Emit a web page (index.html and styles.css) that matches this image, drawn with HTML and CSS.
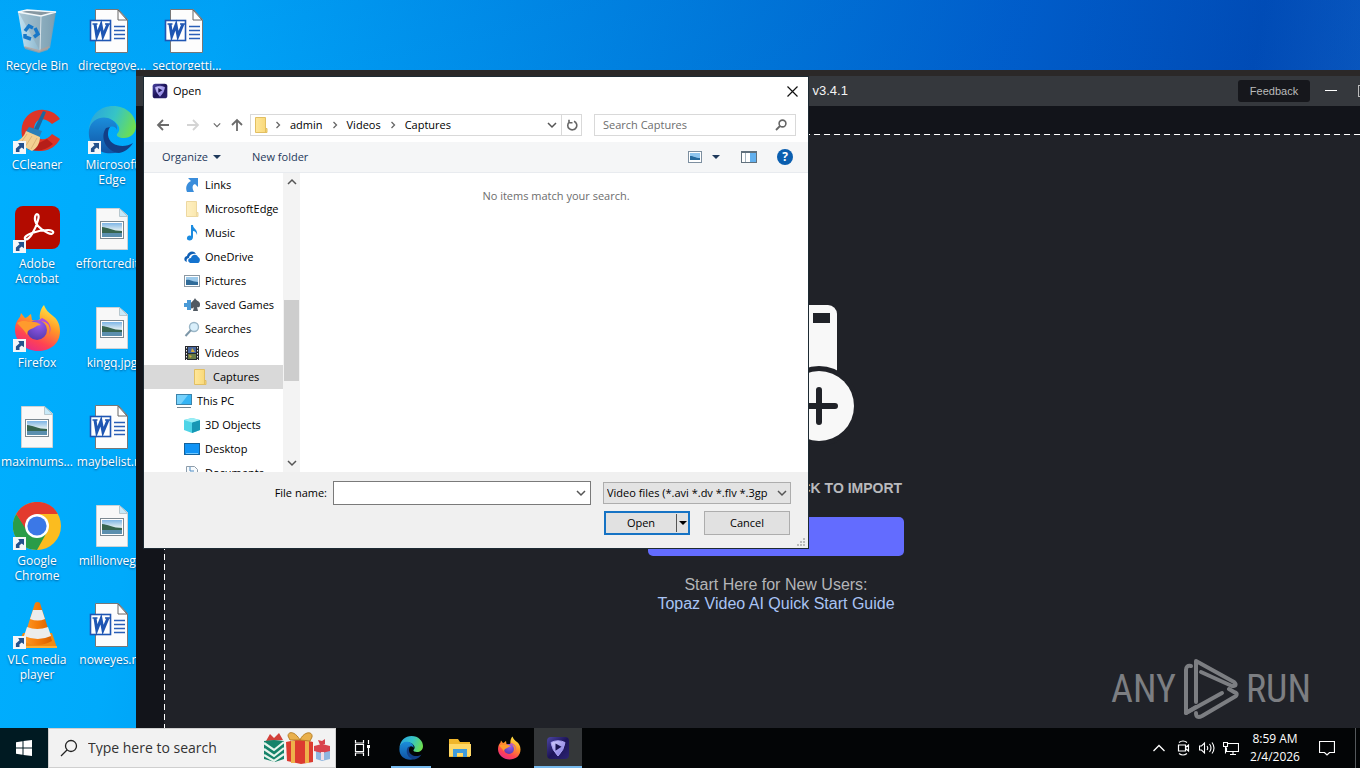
FILE: index.html
```html
<!DOCTYPE html>
<html lang="en">
<head>
<meta charset="utf-8">
<title>Desktop</title>
<link rel="stylesheet" href="styles.css">
</head>
<body>
<svg class="defs" aria-hidden="true">
  <defs>
    <linearGradient id="gGlass" x1="0" x2="1"><stop offset="0" stop-color="#e4edf2"/><stop offset=".55" stop-color="#a9bcc7"/><stop offset="1" stop-color="#7f98a6"/></linearGradient>
    <linearGradient id="gEdgeTop" x1="0" x2="1" y1=".3" y2=".6"><stop offset="0" stop-color="#2aa5dd"/><stop offset=".5" stop-color="#36c4c6"/><stop offset="1" stop-color="#6fe04c"/></linearGradient>
    <linearGradient id="gEdgeLow" x1="0" x2="0" y1="0" y2="1"><stop offset="0" stop-color="#1b8edb"/><stop offset="1" stop-color="#1153a4"/></linearGradient>
    <linearGradient id="gFox" x1=".8" x2=".3" y1="0" y2="1"><stop offset="0" stop-color="#fff04a"/><stop offset=".4" stop-color="#ff9a26"/><stop offset=".75" stop-color="#ff4352"/><stop offset="1" stop-color="#e62a88"/></linearGradient>
    <radialGradient id="gGlobe" cx=".6" cy=".2" r=".9"><stop offset="0" stop-color="#9a5cf0"/><stop offset="1" stop-color="#5037a8"/></radialGradient>
    <linearGradient id="gCone" x1="0" x2="1"><stop offset="0" stop-color="#ff9c2a"/><stop offset=".5" stop-color="#f57c0a"/><stop offset="1" stop-color="#d85f00"/></linearGradient>
    <linearGradient id="gPhoto" x1="0" x2="0" y1="0" y2="1"><stop offset="0" stop-color="#7db5e6"/><stop offset=".5" stop-color="#dcebf0"/><stop offset="1" stop-color="#5d8fa3"/></linearGradient>
    <linearGradient id="gTopaz" x1="0" x2="1" y1="0" y2="1"><stop offset="0" stop-color="#4c46a4"/><stop offset=".5" stop-color="#1d1458"/><stop offset="1" stop-color="#2c2372"/></linearGradient>
    <linearGradient id="gGem" x1="0" x2="1" y1="0" y2="1"><stop offset="0" stop-color="#d4cffc"/><stop offset="1" stop-color="#7a70dd"/></linearGradient>
    <linearGradient id="gFolder" x1="0" x2="1"><stop offset="0" stop-color="#ffe79b"/><stop offset="1" stop-color="#f8d775"/></linearGradient>

    <symbol id="word" viewBox="0 0 48 48"><path d="M7.500 2.500h23l9 10v33h-32z" fill="#fdfdfd" stroke="#777"/><path d="M30 3v10h9z" fill="#fff" stroke="#666"/><path d="M26 19.500h11M26 23.500h11M26 27.500h11M26 31.500h11" stroke="#2a5fb8" stroke-width="1.400"/><rect x="2.500" y="13.500" width="20" height="20" fill="#fff" stroke="#1f56b3" stroke-width="1.600"/><path d="M7 17l1.800 12L13 18l2 11 5-12" fill="none" stroke="#1f56b3" stroke-width="3"/><path d="M4.500 17h5M17 17h5" stroke="#1f56b3" stroke-width="1.500"/></symbol>
    <symbol id="image" viewBox="0 0 48 48"><path d="M8.500 3.500h23l8 7v34h-31z" fill="#f8f8f8" stroke="#ccd2d6"/><path d="M31.500 3.500v8h8z" fill="#c8e9f8" stroke="#b7c7ce"/><rect x="12.500" y="16.500" width="23" height="17" fill="#fff" stroke="#7c8890"/><rect x="14" y="18" width="20" height="14" fill="url(#gPhoto)"/><path d="M14 22c5 0 11 4 20 4v2H14z" fill="#36644f"/><path d="M14 28h20v4H14z" fill="#5b8fae"/></symbol>
    <symbol id="bin" viewBox="0 0 48 48"><path d="M5 5l9-2 29 2-6 36-11 4-15-5z" fill="url(#gGlass)" opacity=".85"/><path d="M6 6l21 4 15-4-6 34-9 4z" fill="#8fa4b0" opacity=".45"/><path d="M5 5l9-2 29 2-15 4z" fill="#8798a2" stroke="#f4f8fa" stroke-width="1.300"/><path d="M28 9l-1 35" stroke="#d6e2e8"/><path d="M11 39l15 4 10-4-1 4-9 3-14-4z" fill="#b89d91" opacity=".7"/><g fill="none" stroke="#1878c8" stroke-width="3.500"><path d="M12 24l4-5 4 2M22 21l3 6-4 3M18 32l-6-2 0-3"/></g></symbol>
    <symbol id="ccleaner" viewBox="0 0 48 48"><path d="M47 13C39 0 14-1 9 20c-3 17 9 26 20 25 9-1 14-5 18-12l-8-5c-6 8-17 7-18-4 0-12 10-14 18-6z" fill="#dd3527"/><path d="M14 43c10 3 18 2 26-5l-6-5" fill="#b61e19"/><path d="M30 5l3 1-8 19-4-2z" fill="#1c679e"/><path d="M16 21l13 4-3 7-14-5z" fill="#2a7fb8"/><path d="M13 25l14 6c0 7-4 12-8 14L2 36c5-2 9-5 11-11z" fill="#f3cf91"/><path d="M14 28L7 38M19 30l-7 11M24 32l-6 11" stroke="#dcb477"/></symbol>
    <symbol id="edge" viewBox="0 0 48 48"><path d="M1 24C2 8 13 0 25 0c14 0 23 10 23 20 0 8-6 12-12 12-5 0-8-2-7-4 3-3 3-7 0-10C22 9 5 11 1 24z" fill="url(#gEdgeTop)"/><path d="M1 24c2-11 12-14 19-12 6 2 10 6 9 12-1-3-5-5-8-2-5 5-1 20 10 24C14 51-1 41 1 24z" fill="url(#gEdgeLow)"/><path d="M18 22c-7 10 1 24 13 25 6-1 11-5 14-10-9 6-24 3-25-8 0-3 0-5 2-8z" fill="#123f87"/></symbol>
    <symbol id="acrobat" viewBox="0 0 48 48"><rect x="2" y="1" width="45" height="43" rx="8" fill="#b30b00"/><path d="M12 34c-2-4 13-9 23-9 8 0 6 6 0 3-8-4-14-10-13-16 1-5 5-3 3 3-2 8-9 22-13 19z" fill="none" stroke="#fff" stroke-width="2.200"/></symbol>
    <symbol id="firefox" viewBox="0 0 48 48"><path d="M31 1c2 5 4 7 9 11 3 2 7 7 7 15 0 13-10 20-22 20S2 38 2 26C2 19 5 15 7 13l1-4 4 5c2 0 4-3 6-4l1 6c3 0 6 1 8-1-1-5 1-11 4-14z" fill="url(#gFox)"/><circle cx="24" cy="26" r="10" fill="url(#gGlobe)"/><path d="M4 19c5-3 9-2 12-1 4-1 9 0 12 3-5 0-6 3-10 4-3 1-4 3-4 6-2-4-5-7-10-12z" fill="#ff9b2d"/><path d="M29 14c7 3 11 9 7 17 3-11-3-14-11-14z" fill="#b24cd9"/></symbol>
    <symbol id="chrome" viewBox="0 0 48 48"><circle cx="24" cy="24" r="24" fill="#fbbc1f"/><path d="M24 24h-12L3.200 12A24 24 0 0 0 24 48l10-18z" fill="#2a9c48"/><path d="M24 12h20.800C37-4 12-4 3.200 12L14 29z" fill="#e33b2e"/><circle cx="24" cy="24" r="12" fill="#fff"/><circle cx="24" cy="24" r="9.600" fill="#3b78e7"/></symbol>
    <symbol id="vlc" viewBox="0 0 48 48"><path d="M10 32h29l5 15H3z" fill="#f08a14"/><path d="M3 45h41v2H3z" fill="#ffae33"/><path d="M22 2q2.500-2 5 0l12 38q-15 8-29 0z" fill="url(#gCone)"/><path d="M20 9h9l3 9q-7 3-15 0zM14 26q10 4 21 0l3 9q-13 6-27 0z" fill="#ececec"/></symbol>
    <symbol id="topaz" viewBox="0 0 24 24"><rect x="1" y="1" width="22" height="22" rx="4" fill="url(#gTopaz)"/><path d="M5 6.500Q12 3 19 6.500 18 14 12 20 6 14 5 6.500z" fill="url(#gGem)" stroke="#a9a0f2" stroke-linejoin="round"/><path d="M9.500 7.500l6 3.300-6 4z" fill="#19124f"/></symbol>
    <symbol id="folder" viewBox="0 0 16 16"><path d="M2.500.5h10v11h1.500v4H2.500z" fill="url(#gFolder)" stroke="#e2bf62"/><path d="M12.500 10v5" stroke="#e2bf62"/></symbol>
    <symbol id="explorer" viewBox="0 0 24 24"><path d="M1 3h9l2 3h10v15H1z" fill="#f0b62b"/><path d="M1 8h22v12H1z" fill="#ffd866"/><path d="M5 21v-8h14v8h-4v-4H9v4z" fill="#3f9bda"/></symbol>
    <symbol id="picture" viewBox="0 0 16 16"><rect x=".5" y="2.500" width="15" height="11" fill="#fff" stroke="#8b98a3"/><rect x="2" y="4" width="12" height="8" fill="#9cc9ea"/><path d="M2 7c4-1 6 2 12 2v3H2z" fill="#316c99"/></symbol>
    <symbol id="links" viewBox="0 0 16 16"><path d="M4 1h10v9l-3-3c-3 1-3 4-1 8H3C1 10 3 6 7 4z" fill="#3a8ddb"/></symbol>
    <symbol id="music" viewBox="0 0 16 16"><path d="M7 0h2c0 4 5 4 4 10-1-3-2-4-4-4v6c0 5-7 4-6 1 0-2 2-3 4-2z" fill="#1b8be0"/></symbol>
    <symbol id="onedrive" viewBox="0 0 16 16"><path d="M1 12c-2-3 1-5 2-5 1-5 7-6 9-2-5-1-7 2-7 4-2 0-3 2-2 4z" fill="#0e5fb5"/><path d="M6 14c-3-2-2-5 1-5 1-4 6-4 7-1 3 1 2 6 0 6z" fill="#1473cf"/></symbol>
    <symbol id="games" viewBox="0 0 16 16"><path d="M11 1c-1 3-5 4-5 8 0 3 3 3 4 1l-1 4h5l-1-4c3 1 3-1 3-3 0-3-4-3-5-6z" fill="#505962"/><path d="M0 6h3V3h4v10H3v-3H0z" fill="#4a9ad6"/></symbol>
    <symbol id="search" viewBox="0 0 16 16"><circle cx="10" cy="6" r="4.500" fill="#d9effb" stroke="#9ab6c7" stroke-width="1.400"/><path d="M7 9l-5.500 6" stroke="#7d97a8" stroke-width="2"/></symbol>
    <symbol id="video" viewBox="0 0 16 16"><path d="M1 1h14v14H1z" fill="#27292e"/><path d="M4 2h8v6H4z" fill="#48679f"/><path d="M4 9h8v5H4z" fill="#677b48"/><path d="M8 3l3 4H7zM5 10l3 1-2 2z" fill="#d8ad3a"/><path d="M2.500 2v13M13.500 2v13" stroke="#eee" stroke-dasharray="1.500 1.500"/></symbol>
    <symbol id="pc" viewBox="0 0 16 16"><rect x=".5" y="1.500" width="15" height="10" fill="#35b4f4" stroke="#3c83aa"/><path d="M1 2h11L5 11H1z" fill="#76d1fb"/><path d="M1 14.500h14" stroke="#72848f"/></symbol>
    <symbol id="cube" viewBox="0 0 16 16"><path d="M0 3l8-2 8 2v10l-8 3-8-3z" fill="#4ed4e7"/><path d="M8 5.500L16 3v10l-8 3z" fill="#1797b4"/><path d="M0 3l8 2.500L16 3 8 1z" fill="#9beef5"/></symbol>
    <symbol id="screen" viewBox="0 0 16 16"><rect x=".5" y="2.500" width="15" height="11" fill="#1093f5" stroke="#14629c"/><path d="M2 12.500h12" stroke="#72c9ff"/></symbol>
    <symbol id="docs" viewBox="0 0 16 16"><path d="M2.500 1.500h8l3 3v11h-11z" fill="#f7fafc" stroke="#8e9dab"/><path d="M6 2v4h4M4.500 8h7M4.500 11h7" stroke="#4f8cc4" fill="none"/></symbol>
    <symbol id="chev" viewBox="0 0 10 10"><path d="M1 3l4 4 4-4" fill="none" stroke="currentColor" stroke-width="1.500"/></symbol>
    <symbol id="tri" viewBox="0 0 10 10"><path d="M1 3h8L5 7z" fill="currentColor"/></symbol>
    <symbol id="crumb" viewBox="0 0 10 10"><path d="M3.500 2l3 3-3 3" fill="none" stroke="#666" stroke-width="1.300"/></symbol>
    <symbol id="arrow" viewBox="0 0 14 14"><path d="M13 7H2M7 2L2 7l5 5" fill="none" stroke="currentColor" stroke-width="1.800"/></symbol>
  </defs>
</svg>

<main class="desktop">
  <ul class="shortcuts">
    <li><svg><use href="#bin"/></svg><span>Recycle Bin</span></li>
    <li class="linked"><svg><use href="#ccleaner"/></svg><span>CCleaner</span></li>
    <li class="linked"><svg><use href="#acrobat"/></svg><span>Adobe<br>Acrobat</span></li>
    <li class="linked"><svg><use href="#firefox"/></svg><span>Firefox</span></li>
    <li><svg><use href="#image"/></svg><span>maximums...</span></li>
    <li class="linked"><svg><use href="#chrome"/></svg><span>Google<br>Chrome</span></li>
    <li class="linked"><svg><use href="#vlc"/></svg><span>VLC media<br>player</span></li>
    <li><svg><use href="#word"/></svg><span>directgove...</span></li>
    <li class="linked"><svg><use href="#edge"/></svg><span>Microsoft<br>Edge</span></li>
    <li><svg><use href="#image"/></svg><span>effortcredit...</span></li>
    <li><svg><use href="#image"/></svg><span>kingq.jpg</span></li>
    <li><svg><use href="#word"/></svg><span>maybelist.rtf</span></li>
    <li><svg><use href="#image"/></svg><span>millionveg...</span></li>
    <li><svg><use href="#word"/></svg><span>noweyes.rtf</span></li>
    <li><svg><use href="#word"/></svg><span>sectorgetti...</span></li>
  </ul>

  <section class="app" aria-label="Topaz Video AI">
    <header class="app-bar">
      <h1><svg><use href="#topaz"/></svg>Topaz Video AI <span>v3.4.1</span></h1>
      <div class="app-actions">
        <button class="feedback" type="button">Feedback</button>
        <button class="win-btn" type="button" aria-label="Minimize"><svg viewBox="0 0 12 12"><path d="M0 5.500h12" stroke="#fff"/></svg></button>
        <button class="win-btn" type="button" aria-label="Maximize"><svg viewBox="0 0 12 12"><rect x=".5" y=".5" width="11" height="11" fill="none" stroke="#bbb"/></svg></button>
      </div>
    </header>
    <div class="app-body">
      <div class="dropzone">
        <svg class="film" viewBox="0 0 122 136"><rect width="122" height="120" rx="9" fill="#f8f8f8"/><path d="M8 8h17v10H8zM8 36h17v10H8zM8 64h17v10H8zM8 92h17v10H8zM98 8h17v10H98z" fill="#202228"/><circle cx="104" cy="101" r="40" fill="#202228"/><circle cx="104" cy="101" r="35" fill="#f8f8f8"/><path d="M104 85v32M88 101h32" stroke="#202228" stroke-width="6" stroke-linecap="round"/></svg>
        <h2>DRAG &amp; DROP OR CLICK TO IMPORT</h2>
        <button class="browse" type="button" aria-label="Browse"></button>
        <p class="help">Start Here for New Users:<br><a href="#guide">Topaz Video AI Quick Start Guide</a></p>
      </div>
    </div>
  </section>

  <section class="dialog" role="dialog" aria-labelledby="dlg-title">
    <header class="dlg-title">
      <svg class="i16"><use href="#topaz"/></svg>
      <h2 id="dlg-title">Open</h2>
      <button type="button" aria-label="Close"><svg viewBox="0 0 11 11"><path d="M.5.5l10 10M10.500.5l-10 10" stroke="#111" stroke-width="1.200"/></svg></button>
    </header>
    <nav class="dlg-nav">
      <button class="nav-btn" type="button" aria-label="Back"><svg><use href="#arrow"/></svg></button>
      <button class="nav-btn off" type="button" aria-label="Forward"><svg class="flip"><use href="#arrow"/></svg></button>
      <button class="nav-btn slim" type="button" aria-label="Recent locations"><svg><use href="#chev"/></svg></button>
      <button class="nav-btn up" type="button" aria-label="Up"><svg class="turn"><use href="#arrow"/></svg></button>
      <div class="address">
        <svg class="i16"><use href="#folder"/></svg>
        <svg class="i10"><use href="#crumb"/></svg><a href="#admin">admin</a>
        <svg class="i10"><use href="#crumb"/></svg><a href="#videos">Videos</a>
        <svg class="i10"><use href="#crumb"/></svg><a href="#captures">Captures</a>
        <button class="drop" type="button" aria-label="Previous locations"><svg class="i10"><use href="#chev"/></svg></button>
        <button class="refresh" type="button" aria-label="Refresh"><svg viewBox="0 0 12 12"><path d="M3.500 2.800A4.500 4.500 0 1 0 8 2.200M3 .8v3h3.500" fill="none" stroke="#666" stroke-width="1.600"/></svg></button>
      </div>
      <div class="find">
        <input type="text" placeholder="Search Captures" aria-label="Search Captures">
        <svg viewBox="0 0 12 12"><circle cx="7.500" cy="4.500" r="3.400" fill="none" stroke="#666" stroke-width="1.600"/><path d="M5 7L1 11" stroke="#666" stroke-width="1.800"/></svg>
      </div>
    </nav>
    <div class="dlg-tools">
      <button type="button">Organize <svg class="i10"><use href="#tri"/></svg></button>
      <button class="new" type="button">New folder</button>
      <button class="view" type="button" aria-label="Change view"><svg viewBox="0 0 14 12"><rect x=".5" y=".5" width="13" height="11" fill="#fff" stroke="#7d8fa0"/><rect x="2" y="2" width="10" height="7" fill="#8fc5ee"/><path d="M2 5c4 0 5 2 10 2v2H2z" fill="#26699c"/></svg></button>
      <button class="more" type="button" aria-label="More options"><svg class="i10"><use href="#tri"/></svg></button>
      <button class="pane" type="button" aria-label="Preview pane"><svg viewBox="0 0 16 12"><rect x=".5" y=".5" width="15" height="11" fill="#fff" stroke="#61717d"/><path d="M1 1.500h14" stroke="#61717d"/><path d="M9 2h6v9H9z" fill="#62b0ee"/><path d="M4.500 2v9" stroke="#a5b4bf"/></svg></button>
      <button class="help-btn" type="button" aria-label="Help">?</button>
    </div>
    <div class="dlg-body">
      <ul class="tree">
        <li><svg><use href="#links"/></svg>Links</li>
        <li class="faded"><svg><use href="#folder"/></svg>MicrosoftEdge</li>
        <li><svg><use href="#music"/></svg>Music</li>
        <li><svg><use href="#onedrive"/></svg>OneDrive</li>
        <li><svg><use href="#picture"/></svg>Pictures</li>
        <li><svg><use href="#games"/></svg>Saved Games</li>
        <li><svg><use href="#search"/></svg>Searches</li>
        <li><svg><use href="#video"/></svg>Videos</li>
        <li class="child selected"><svg><use href="#folder"/></svg>Captures</li>
        <li class="root"><svg><use href="#pc"/></svg>This PC</li>
        <li><svg><use href="#cube"/></svg>3D Objects</li>
        <li><svg><use href="#screen"/></svg>Desktop</li>
        <li><svg><use href="#docs"/></svg>Documents</li>
      </ul>
      <div class="scroll">
        <svg class="i10 flip-v"><use href="#chev"/></svg>
        <div class="track"><div class="thumb"></div></div>
        <svg class="i10"><use href="#chev"/></svg>
      </div>
      <p class="empty">No items match your search.</p>
    </div>
    <form class="dlg-foot">
      <div class="foot-row">
        <label for="fname">File name:</label>
        <div class="combo"><input id="fname" type="text"><svg class="i10"><use href="#chev"/></svg></div>
        <div class="type"><select aria-label="File type"><option>Video files (*.avi *.dv *.flv *.3gp</option></select><svg class="i10"><use href="#chev"/></svg></div>
      </div>
      <div class="foot-row">
        <div class="split"><button type="button">Open</button><button class="arrow" type="button" aria-label="Open options"><svg class="i10"><use href="#tri"/></svg></button></div>
        <button class="cancel" type="button">Cancel</button>
      </div>
      <svg class="grip" viewBox="0 0 9 9"><path d="M6 0h2v2H6zM3 3h2v2H3zM6 3h2v2H6zM0 6h2v2H0zM3 6h2v2H3zM6 6h2v2H6z" fill="#bcbcbc"/></svg>
    </form>
  </section>

  <div class="watermark">
    <span>ANY</span>
    <svg viewBox="0 0 56 62"><g fill="none" stroke="currentColor" stroke-width="4" stroke-linejoin="round" stroke-linecap="round"><path d="M8 8Q3 7 3 12v43l36-20"/><path d="M13 44V3l38 21q4 4-2 4L18 14"/><path d="M3 55l10-6M13 55q0 6 6 3l34-20q2-3-2-4l-5-3"/></g></svg>
    <span>RUN</span>
  </div>
</main>

<footer class="taskbar">
  <button class="start" type="button" aria-label="Start"><svg viewBox="0 0 16 16"><path d="M0 2.200l6.500-.9v6.200H0zM7.500 1.100L16 0v7.500H7.500zM0 8.500h6.500v6.200L0 13.800zM7.500 8.500H16V16l-8.500-1.100z" fill="#fff"/></svg></button>
  <div class="task-search">
    <svg class="lens" viewBox="0 0 18 18"><circle cx="11" cy="7" r="5.500" fill="none" stroke="#222" stroke-width="1.300"/><path d="M7 11l-6 6" stroke="#222" stroke-width="1.300"/></svg>
    <input type="text" placeholder="Type here to search" aria-label="Type here to search">
    <svg class="gifts" viewBox="0 0 68 34"><path d="M3 10l4-7 4 4 5-5 4 7z" fill="#d2403a"/><path d="M1 10l10-1 10 1v18l-9 3-11-3z" fill="#16836a"/><path d="M1 12l10 7 10-8M1 18l10 7 10-8M1 24l10 6 10-7" fill="none" stroke="#e7f4ec" stroke-width="2.200"/><path d="M23 11l15-3 12 3v20l-12 2-14-3z" fill="#dc3b30"/><path d="M28 10h4v22h-4zM42 10h4v22h-4z" fill="#eeb24b"/><path d="M37 9C32 0 25 0 25 5l2 4zM37 9c4-9 13-9 12-3l-2 4z" fill="#e9b04c" stroke="#b98128"/><path d="M53 17l6-2 8 2v11l-8 2-6-2z" fill="#8fb6df"/><path d="M51 15l8-2 8 2v5l-8 2-8-2zM57 14l-2-5 4 1 3-2v5z" fill="#d9434d"/><path d="M58 21h3v8h-3z" fill="#f3dfe5"/></svg>
  </div>
  <div class="apps">
    <button type="button" aria-label="Task View"><svg class="i18" viewBox="0 0 18 18"><path d="M2.500 1v3h8V1M2.500 17v-3h8v3M2.500 5.500h8v7h-8zM15.500 1v4M15.500 9v8" fill="none" stroke="#fff" stroke-width="1.200"/><path d="M14 6h3v3h-3z" fill="#fff"/></svg></button>
    <button class="running" type="button" aria-label="Microsoft Edge"><svg><use href="#edge"/></svg></button>
    <button type="button" aria-label="File Explorer"><svg><use href="#explorer"/></svg></button>
    <button type="button" aria-label="Firefox"><svg><use href="#firefox"/></svg></button>
    <button class="running active" type="button" aria-label="Topaz Video AI"><svg><use href="#topaz"/></svg></button>
  </div>
  <div class="tray">
    <button type="button" aria-label="Show hidden icons"><svg viewBox="0 0 16 16"><path d="M2.500 11L8 5.500l5.500 5.500" fill="none" stroke="#fff" stroke-width="1.300"/></svg></button>
    <button type="button" aria-label="Meet Now"><svg viewBox="0 0 16 16"><path d="M4 2.500q4-3 8 0M4 13.500q4 3 8 0M3.500 5h7v6h-7zM10.500 7.500L13.500 5v6l-3-2.500" fill="none" stroke="#fff" stroke-width="1.200"/></svg></button>
    <button type="button" aria-label="Volume"><svg viewBox="0 0 16 16"><path d="M.5 6v4h2l3 3V3l-3 3zM8 6q1.500 2 0 4M10.500 4q3 4 0 8M13 2.500q4 5.500 0 11" fill="none" stroke="#fff" stroke-width="1.100"/></svg></button>
    <button type="button" aria-label="Network"><svg viewBox="0 0 16 16"><path d="M4.500 3.500h11v8H3.500v-4M7 14.500h6M10 11.500v3M.5 2.500h4v4h-4zM2.500 6.500v7" fill="none" stroke="#fff" stroke-width="1.100"/></svg></button>
    <time datetime="2026-02-04T08:59">8:59 AM<br>2/4/2026</time>
    <button class="notes" type="button" aria-label="Notifications"><svg viewBox="0 0 16 16"><path d="M.5 1.500h15v11h-5L8 15l-2.500-2.500h-5z" fill="none" stroke="#fff" stroke-width="1.200"/></svg></button>
    <button class="peek" type="button" aria-label="Show desktop"></button>
  </div>
</footer>
</body>
</html>
```
FILE: styles.css
```css
* { box-sizing: border-box; }

body {
  margin: 0;
  height: 100vh;
  display: flex;
  flex-direction: column;
  overflow: hidden;
  font: 12px/16px "Open Sans", "Noto Sans", sans-serif;
  color: #000;
}

h1, h2, p, ul { margin: 0; padding: 0; font: inherit; }
ul { list-style: none; }
button, input, select { font: inherit; color: inherit; border: 0; background: none; padding: 0; margin: 0; border-radius: 0; }
input { outline: none; min-width: 0; }
a { color: inherit; text-decoration: none; }
svg { flex: none; display: block; }

.defs { position: absolute; width: 0; height: 0; }
.i10 { width: 10px; height: 10px; }
.i16 { width: 16px; height: 16px; }

/* Desktop */
.desktop {
  position: relative;
  flex: 1;
  min-height: 0;
  overflow: hidden;
  background:
    linear-gradient(180deg, rgba(0, 90, 200, .12), transparent 180px),
    linear-gradient(100deg, #00b0ff 0%, #00aafb 15%, #0092ec 32%, #0079da 50%, #005ecb 68%, #004ab4 85%, #0a56bd 93%, #084aae 100%);
}

.shortcuts {
  display: grid;
  grid-template-rows: repeat(7, 99px);
  grid-auto-columns: 74px;
  grid-auto-flow: column;
  column-gap: 1px;
}

.shortcuts li {
  position: relative;
  display: flex;
  flex-direction: column;
  align-items: center;
  gap: 3px;
  padding-top: 7px;
  line-height: 15px;
  text-align: center;
  white-space: nowrap;
  color: #fff;
  text-shadow: 0 1px 2px rgba(0, 40, 90, .7);
}

.shortcuts svg { width: 48px; height: 48px; }

.linked::before,
.linked::after { content: ""; position: absolute; }
.linked::before { left: 13px; top: 42px; width: 13px; height: 13px; background: #f3f6f9; }
.linked::after {
  left: 15px;
  top: 44px;
  width: 9px;
  height: 9px;
  background: #24518c;
  clip-path: polygon(35% 0, 100% 0, 100% 70%, 75% 50%, 50% 70%, 50% 100%, 10% 100%, 10% 60%, 50% 25%);
}

/* Topaz window */
.app {
  position: absolute;
  left: 136px;
  top: 70px;
  right: -56px;
  bottom: 0;
  display: flex;
  flex-direction: column;
  background: #12141a;
  border-top: 6px solid #2b2828;
  font-family: "Liberation Sans", Arial, sans-serif;
}

.app-bar {
  display: grid;
  grid-template-columns: 1fr auto 1fr;
  align-items: center;
  height: 30px;
  background: #35383d;
  color: #fff;
}

.app-bar h1 { grid-column: 2; display: flex; align-items: center; gap: 5px; font-size: 13px; color: #aaa; }
.app-bar h1 svg { width: 12px; height: 12px; }
.app-bar h1 span { color: #f4f4f4; }
.app-actions { display: flex; justify-content: flex-end; align-items: center; gap: 15px; padding-right: 46px; }
.feedback { width: 72px; height: 22px; border-radius: 3px; background: #16171c; color: #bbb; font-size: 11px; }
.win-btn { width: 12px; height: 12px; }
.win-btn + .win-btn { margin-left: 6px; }

.app-body { flex: 1; padding: 28px 28px 0; }

.dropzone {
  display: flex;
  flex-direction: column;
  align-items: center;
  height: 100%;
  padding-top: 171px;
  background:
    repeating-linear-gradient(90deg, #fff 0 6px, transparent 6px 10px) top / 100% 1px no-repeat,
    repeating-linear-gradient(180deg, #fff 0 6px, transparent 6px 10px) left / 1px 100% no-repeat,
    #202228;
}

.film { width: 122px; height: 136px; overflow: visible; }
.dropzone h2 { margin-top: 38px; font-size: 14px; line-height: 18px; font-weight: bold; color: #b9babd; white-space: nowrap; }
.browse { width: 256px; height: 39px; margin-top: 20px; border-radius: 5px; background: #636cff; }
.help { margin-top: 19px; font-size: 16px; line-height: 19px; text-align: center; color: #b4b5b8; }
.help a { color: #a9c4f5; }

/* File dialog */
.dialog {
  position: absolute;
  left: 144px;
  top: 77px;
  width: 664px;
  background: #fff;
  box-shadow: 0 0 0 1px #1d2a33;
  font-size: 11px;
}

.dlg-title { display: flex; align-items: center; gap: 5px; height: 30px; padding: 0 10px 2px 8px; }
.dlg-title button { width: 11px; height: 11px; margin-left: auto; }

.dlg-nav { display: flex; align-items: center; height: 35px; padding: 0 12px; }
.nav-btn { display: grid; place-items: center; width: 14px; margin-right: 16px; color: #6b6b6b; }
.nav-btn svg { width: 14px; height: 14px; }
.nav-btn.off { color: #d4d4d4; margin-right: 12px; }
.nav-btn.slim { width: 10px; margin-right: 8px; }
.nav-btn.slim svg { width: 8px; height: 8px; }
.nav-btn.up { margin-right: 6px; }
.flip { transform: scaleX(-1); }
.flip-v { transform: scaleY(-1); }
.turn { transform: rotate(90deg); }

.address { display: flex; flex: 1; align-items: center; height: 22px; padding-left: 2px; border: 1px solid #d9d9d9; }
.address a { margin: 0 7px; }
.address .i16 { margin-right: 4px; }
.drop { display: grid; place-items: center; margin-left: auto; width: 18px; color: #555; }
.refresh { display: grid; place-items: center; width: 20px; height: 20px; border-left: 1px solid #d9d9d9; }
.refresh svg { width: 12px; height: 12px; }

.find { display: flex; align-items: center; width: 202px; height: 22px; margin-left: 12px; padding: 0 8px; border: 1px solid #d9d9d9; }
.find input { flex: 1; }
.find input::placeholder { color: #6d6d6d; opacity: 1; }
.find svg { width: 12px; height: 12px; }

.dlg-tools { display: flex; align-items: center; height: 31px; padding: 0 15px 0 18px; background: #f5f6f7; border-bottom: 1px solid #e8ebef; color: #1e395b; }
.dlg-tools button { display: flex; align-items: center; gap: 4px; }
.dlg-tools .new { margin-left: 30px; }
.dlg-tools .view { margin-left: auto; }
.view svg { width: 14px; height: 12px; }
.dlg-tools .more { margin-left: 9px; }
.dlg-tools .pane { margin-left: 20px; }
.pane svg { width: 16px; height: 12px; }
.dlg-tools .help-btn { justify-content: center; width: 16px; height: 16px; margin-left: 20px; border-radius: 50%; background: #0b5fb0; color: #fff; font-size: 12px; font-weight: bold; }

.dlg-body { display: flex; height: 299px; overflow: hidden; }
.tree { width: 139px; height: 299px; overflow: hidden; }
.tree li { display: flex; align-items: center; gap: 5px; height: 24px; padding-left: 40px; white-space: nowrap; }
.tree svg { width: 16px; height: 16px; }
.tree .child { padding-left: 48px; }
.tree .root { padding-left: 32px; }
.tree .selected { background: #d9d9d9; }
.faded svg { opacity: .6; }
.scroll { display: flex; flex-direction: column; align-items: center; width: 17px; padding: 4px 1px; background: #f3f3f3; color: #555; }
.track { flex: 1; width: 100%; padding-top: 113px; }
.thumb { height: 81px; background: #cdcdcd; }
.empty { flex: 1; padding: 15px 0 0 4px; text-align: center; color: #6d6d6d; }

.dlg-foot { position: relative; display: flex; flex-direction: column; gap: 6px; height: 76px; padding: 9px 17px 0; background: #f0f0f0; }
.foot-row { display: flex; justify-content: flex-end; align-items: center; }
.combo { display: flex; align-items: center; width: 258px; height: 24px; margin: 0 12px 0 6px; padding: 0 4px; border: 1px solid #7a7a7a; background: #fff; color: #555; }
.combo input { flex: 1; }
.type { position: relative; width: 188px; }
.type select { width: 100%; height: 22px; padding: 0 18px 0 3px; border: 1px solid #adadad; background: #e3e3e3; appearance: none; }
.type svg { position: absolute; right: 4px; top: 6px; color: #555; }
.split { display: flex; width: 86px; height: 24px; border: 2px solid #1673c4; background: #e1e1e1; }
.split button { flex: 1; }
.split .arrow { display: grid; place-items: center; flex: none; width: 12px; margin: 1px 0; border-left: 1px solid #555; }
.cancel { width: 86px; height: 24px; margin: 0 1px 0 14px; border: 1px solid #adadad; background: #e1e1e1; }
.grip { position: absolute; right: 2px; bottom: 1px; width: 9px; height: 9px; }

/* Watermark */
.watermark {
  position: absolute;
  right: 49px;
  bottom: 8px;
  display: flex;
  align-items: center;
  gap: 7px;
  color: #7c7e82;
  font: 38px/62px "Liberation Sans Narrow", "Roboto Condensed", "DejaVu Sans Condensed", sans-serif;
}
.watermark svg { width: 56px; height: 62px; }

/* Taskbar */
.taskbar { display: flex; height: 40px; background: #030506; color: #fff; }
.start { display: grid; place-items: center; width: 48px; background: #001a22; }
.start svg { width: 16px; height: 16px; }
.task-search { display: flex; align-items: center; width: 288px; padding: 0 4px 0 11px; border: 1px solid #cfcfcf; background: #f2f2f2; color: #333; }
.lens { width: 18px; height: 18px; }
.task-search input { flex: 1; margin-left: 10px; font-size: 14px; }
.task-search input::placeholder { color: #333; opacity: 1; }
.gifts { width: 68px; height: 34px; }
.apps { display: flex; gap: 1px; padding-left: 2px; }
.apps button { display: grid; place-items: center; width: 48px; position: relative; }
.apps svg { width: 24px; height: 24px; }
.apps .i18 { width: 18px; height: 18px; }
.running::after { content: ""; position: absolute; left: 4px; right: 4px; bottom: 0; height: 2px; background: #76b9ed; }
.apps .active { background: #343739; }
.active::after { left: 0; right: 0; }
.tray { display: flex; align-items: center; margin-left: auto; }
.tray button { display: grid; place-items: center; width: 24px; height: 40px; }
.tray svg { width: 16px; height: 16px; }
.tray time { width: 60px; padding-left: 4px; line-height: 18px; text-align: center; white-space: nowrap; }
.tray .notes { width: 48px; }
.tray .peek { width: 5px; margin-left: 4px; border-left: 1px solid #55595c; }
```
